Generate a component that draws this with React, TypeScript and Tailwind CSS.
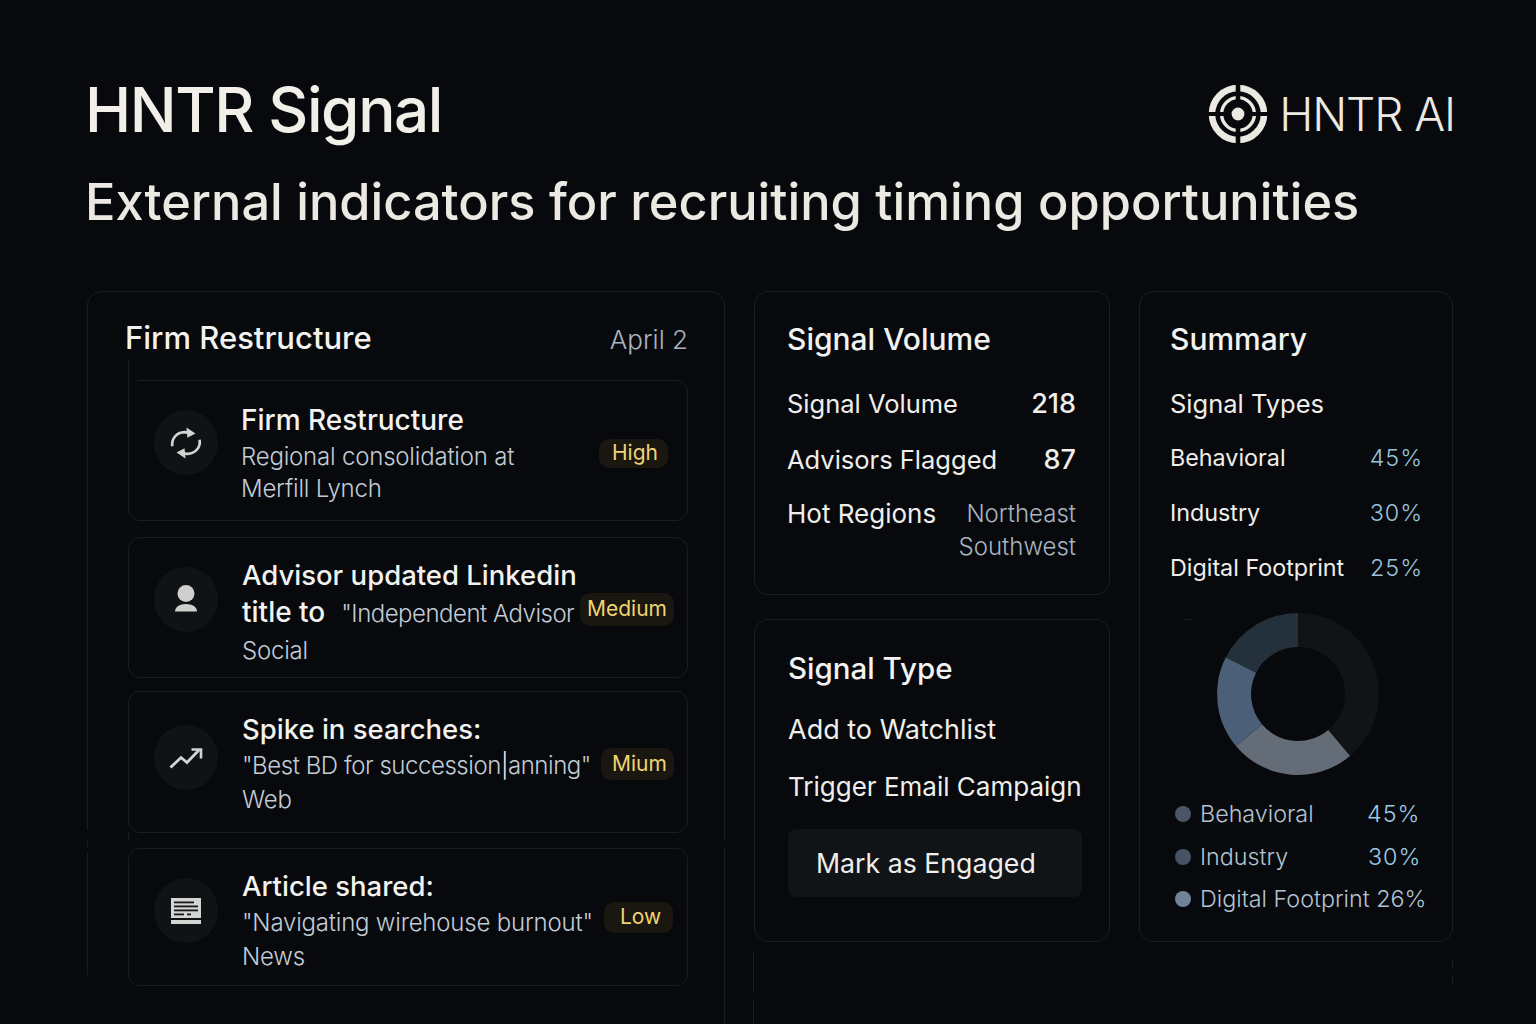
import React from "react";

const font = { fontFamily: "Inter, 'Liberation Sans', sans-serif" };

function polar(r: number, a: number): [number, number] {
  const t = (a * Math.PI) / 180;
  return [100 + r * Math.sin(t), 100 - r * Math.cos(t)];
}
function seg(a0: number, a1: number, R = 81, r = 47) {
  const [x0, y0] = polar(R, a0);
  const [x1, y1] = polar(R, a1);
  const [x2, y2] = polar(r, a1);
  const [x3, y3] = polar(r, a0);
  const large = a1 - a0 > 180 ? 1 : 0;
  return `M${x0} ${y0}A${R} ${R} 0 ${large} 1 ${x1} ${y1}L${x2} ${y2}A${r} ${r} 0 ${large} 0 ${x3} ${y3}Z`;
}

function Logo() {
  return (
    <svg width="62" height="62" viewBox="0 0 62 62" className="shrink-0">
      <g fill="none" stroke="#ece9e3">
        <circle cx="31" cy="31" r="26" strokeWidth="6.6" />
        <circle cx="31" cy="31" r="16.4" strokeWidth="3.4" />
      </g>
      <rect x="28.7" y="0" width="4.6" height="21" fill="#07090c" />
      <rect x="28.7" y="41" width="4.6" height="21" fill="#07090c" />
      <rect x="0" y="29" width="21" height="4" fill="#07090c" />
      <rect x="41" y="29" width="21" height="4" fill="#07090c" />
      <circle cx="31" cy="31" r="6.4" fill="#ece9e3" />
    </svg>
  );
}

function RefreshIcon() {
  return (
    <svg width="34" height="34" viewBox="0 0 36 36" fill="none">
      <path d="M3.6 21.5C2.2 13.5 8 6.8 16.5 6.5c2.2 0 4 .4 5.5 1.2" stroke="#d4d4d2" strokeWidth="2.8" />
      <path d="M18.5 1.5 28 8 19.5 12.5Z" fill="#d4d4d2" />
      <path d="M32.4 14.5c1.4 8-4.4 14.7-12.9 15-2.2 0-4-.4-5.5-1.2" stroke="#d4d4d2" strokeWidth="2.8" />
      <path d="M17.5 34.5 8 28 16.5 23.5Z" fill="#d4d4d2" />
    </svg>
  );
}
function PersonIcon() {
  return (
    <svg width="36" height="36" viewBox="0 0 36 36" fill="#cfcfcd">
      <circle cx="18" cy="11.5" r="8.5" />
      <path d="M7 29.5c0-4.5 4.5-7.5 11-7.5s11 3 11 7.5Z" />
    </svg>
  );
}
function TrendIcon() {
  return (
    <svg width="36" height="36" viewBox="0 0 36 36" fill="none">
      <path d="M2.5 27.5 13 17.5l6 5L31 10" stroke="#d4d4d2" strokeWidth="2.8" />
      <path d="M23.5 9.5h9.5V18.5" stroke="#d4d4d2" strokeWidth="2.6" />
    </svg>
  );
}
function NewsIcon() {
  return (
    <svg width="36" height="36" viewBox="0 0 36 36">
      <rect x="3" y="5" width="30" height="20" fill="#d4d4d2" />
      <rect x="6" y="8.5" width="20" height="1.8" fill="#14171a" />
      <rect x="6" y="12.5" width="24" height="1.8" fill="#14171a" />
      <rect x="6" y="16.5" width="24" height="1.8" fill="#14171a" />
      <rect x="6" y="20.5" width="10" height="1.8" fill="#14171a" />
      <rect x="19" y="20.5" width="4" height="1.8" fill="#14171a" />
      <rect x="3" y="27" width="30" height="4" fill="#d4d4d2" />
    </svg>
  );
}

type RowProps = {
  icon: React.ReactNode;
  title: React.ReactNode;
  lines: React.ReactNode[];
  badge: string;
  badgeClass: string;
  rowClass: string;
  iconClass: string;
  textClass: string;
  titleClass?: string;
  lineClass?: string;
};

function Row({
  icon,
  title,
  lines,
  badge,
  badgeClass,
  rowClass,
  iconClass,
  textClass,
  titleClass = "text-[27.5px] leading-[40px]",
  lineClass = "leading-[34px]",
}: RowProps) {
  return (
    <div className={`relative rounded-[12px] border border-[#171d26] ${rowClass}`}>
      <div className={`absolute flex h-[65px] w-[64px] items-center justify-center rounded-full bg-[#101316] ${iconClass}`}>
        {icon}
      </div>
      <div className={`absolute whitespace-nowrap ${textClass}`}>
        <div className={`font-medium text-[#f2f2f0] ${titleClass}`}>{title}</div>
        {lines.map((l, i) => (
          <div key={i} className={`text-[24px] font-light tracking-[-0.2px] text-[#c3ccd6] ${lineClass}`}>
            {l}
          </div>
        ))}
      </div>
      <div className={`absolute rounded-[10px] bg-[#1a1711] text-[21px] text-[#f0d372] ${badgeClass}`}>
        {badge}
      </div>
    </div>
  );
}

function Stat({ k, v, cls }: { k: string; v: string; cls: string }) {
  return (
    <div className={`flex items-baseline justify-between ${cls}`}>
      <span>{k}</span>
      <span className="font-light tracking-[1px] text-[#9cc3dc]">{v}</span>
    </div>
  );
}

function Mark({ cls }: { cls: string }) {
  return <div className={`absolute ${cls}`} />;
}

export default function App() {
  return (
    <div style={font} className="relative h-[1024px] w-[1536px] overflow-hidden bg-[#07090c] pl-[87px] pr-[84px] pt-[72px] text-[#f0eeea]">
      <div className="flex items-start justify-between">
        <h1 className="ml-[-2px] text-[62px] font-medium leading-[76px] tracking-[-1.4px] text-[#f2efe9]">HNTR Signal</h1>
        <div className="mr-[-3px] mt-[11px] flex items-center gap-[10px]">
          <Logo />
          <span className="text-[46px] font-light leading-[62px] tracking-[-1.1px] text-[#ece9e3]">HNTR AI</span>
        </div>
      </div>
      <h2 className="mt-[24px] ml-[-2px] text-[50.5px] font-medium leading-[60px] text-[#ece9e3]">
        External indicators for recruiting timing opportunities
      </h2>

      <div className="mt-[59px] grid grid-cols-[638px_356px_314px] gap-x-[29px]">
        {/* left */}
        <div className="relative h-[800px] rounded-[14px] border border-[#171d26]">
          <div className="flex items-baseline justify-between pl-[37px] pr-[36px] pt-[26px]">
            <span className="text-[31px] font-[450] leading-[40px] text-[#f2f2f0]">Firm Restructure</span>
            <span className="text-[26px] font-light leading-[40px] text-[#aab4bf]">April 2</span>
          </div>
          <div className="mt-[21px] ml-[40px] mr-[36px] flex flex-col">
            <Row
              icon={<RefreshIcon />}
              title="Firm Restructure"
              titleClass="text-[28px] leading-[42px]"
              lineClass="leading-[32px]"
              lines={["Regional consolidation at", "Merfill Lynch"]}
              badge="High"
              rowClass="-mt-[1px] h-[141px]"
              iconClass="left-[25px] top-[29px]"
              textClass="left-[112px] top-[18px]"
              badgeClass="left-[470px] top-[58px] h-[29px] pl-[13px] pr-[10px] leading-[28px]"
            />
            <Row
              icon={<PersonIcon />}
              title={<>Advisor updated Linkedin</>}
              titleClass="text-[27.5px] leading-[38px]"
              lineClass="leading-[37px]"
              lines={[
                <span key="t">
                  <span className="text-[28px] font-medium tracking-normal text-[#f2f2f0]">title to</span>
                  <span className="ml-[16px] tracking-[-0.5px]">"Independent Advisor</span>
                </span>,
                "Social",
              ]}
              badge="Medium"
              rowClass="mt-[16px] h-[141px]"
              iconClass="left-[25px] top-[29px]"
              textClass="left-[113px] top-[18px]"
              badgeClass="left-[451px] top-[55px] h-[33px] px-[7px] leading-[32px]"
            />
            <Row
              icon={<TrendIcon />}
              title="Spike in searches:"
              lines={[
                <span key="s" className="tracking-[-0.45px]">
                  "Best BD for succession<span className="text-[#f2f2f0]">|</span>anning"
                </span>,
                "Web",
              ]}
              badge="Mium"
              rowClass="mt-[13px] h-[142px]"
              iconClass="left-[25px] top-[33px]"
              textClass="left-[113px] top-[17px]"
              badgeClass="left-[472px] top-[56px] h-[32px] pl-[11px] pr-[7px] leading-[31px]"
            />
            <Row
              icon={<NewsIcon />}
              title="Article shared:"
              lines={['"Navigating wirehouse burnout"', "News"]}
              badge="Low"
              rowClass="mt-[15px] h-[138px]"
              iconClass="left-[25px] top-[29px]"
              textClass="left-[113px] top-[17px]"
              badgeClass="left-[475px] top-[53px] h-[31px] pl-[16px] pr-[12px] leading-[30px]"
            />
          </div>
        </div>

        {/* middle */}
        <div className="flex h-[651px] flex-col gap-[24px]">
          <div className="h-[304px] rounded-[14px] border border-[#171d26] pl-[32px] pr-[33px] pt-[26px] text-[25.5px] leading-[40px]">
            <div className="text-[30px] font-[450] leading-[42px] text-[#f2f2f0]">Signal Volume</div>
            <div className="mt-[24px] flex justify-between"><span>Signal Volume</span><span className="text-[27px] font-medium">218</span></div>
            <div className="mt-[16px] flex justify-between"><span>Advisors Flagged</span><span className="text-[27px] font-medium">87</span></div>
            <div className="mt-[14px] flex justify-between">
              <span className="text-[26px]">Hot Regions</span>
              <span className="mt-[3px] text-right text-[24px] font-light leading-[33px] text-[#aab4bf]">Northeast<br />Southwest</span>
            </div>
          </div>
          <div className="h-[323px] whitespace-nowrap rounded-[14px] border border-[#171d26] pl-[33px] pr-[27px] pt-[27px] text-[27px] leading-[40px]">
            <div className="text-[29.5px] font-[450] leading-[42px] text-[#f2f2f0]">Signal Type</div>
            <div className="mt-[21px]">Add to Watchlist</div>
            <div className="mt-[17px] text-[26px]">Trigger Email Campaign</div>
            <div className="mt-[22px] flex h-[68px] items-center rounded-[8px] bg-[#101417] pl-[28px] text-[26.7px]">Mark as Engaged</div>
          </div>
        </div>

        {/* right */}
        <div className="h-[651px] whitespace-nowrap rounded-[14px] border border-[#171d26] pl-[30px] pr-[29px] pt-[26px]">
          <div className="text-[30px] font-[450] leading-[42px] text-[#f2f2f0]">Summary</div>
          <div className="mt-[24px] text-[25.5px] leading-[40px]">Signal Types</div>
          <Stat k="Behavioral" v="45%" cls="mt-[14px] text-[23.3px] leading-[40px]" />
          <Stat k="Industry" v="30%" cls="mt-[15px] text-[23.3px] leading-[40px]" />
          <Stat k="Digital Footprint" v="25%" cls="mt-[15px] text-[23.3px] leading-[40px]" />
          <svg width="200" height="200" viewBox="0 0 200 200" className="ml-[28px] mt-[6px]">
            <path d={seg(0, 140)} fill="#101417" />
            <path d={seg(140, 230)} fill="#646c78" />
            <path d={seg(230, 297)} fill="#4b5f79" />
            <path d={seg(297, 360)} fill="#25303d" />
          </svg>
          <div className="-mt-[1px] ml-[5px] text-[23.3px] font-light leading-[42.5px] text-[#b4c3d2]">
            <div className="flex items-center">
              <span className="h-[16px] w-[16px] shrink-0 rounded-full bg-[#4a5667]" />
              <span className="ml-[9px] w-[167px]">Behavioral</span>
              <span className="tracking-[1px] text-[#9cc9e6]">45%</span>
            </div>
            <div className="flex items-center">
              <span className="h-[16px] w-[16px] shrink-0 rounded-full bg-[#465365]" />
              <span className="ml-[9px] w-[168px]">Industry</span>
              <span className="tracking-[1px] text-[#9cc9e6]">30%</span>
            </div>
            <div className="flex items-center">
              <span className="h-[16px] w-[16px] shrink-0 rounded-full bg-[#728299]" />
              <span className="ml-[9px]">Digital Footprint 26%</span>
            </div>
          </div>
        </div>
      </div>

      {/* broken frame lines */}
      <Mark cls="left-[86px] top-[975px] h-[49px] w-[3px] bg-[#07090c]" />
      <Mark cls="left-[86px] top-[830px] h-[9px] w-[3px] bg-[#07090c]" />
      <Mark cls="left-[86px] top-[847px] h-[5px] w-[3px] bg-[#07090c]" />
      <Mark cls="left-[723px] top-[840px] h-[8px] w-[3px] bg-[#07090c]" />
      <Mark cls="left-[127px] top-[378px] h-[14px] w-[10px] bg-[#07090c]" />
      <Mark cls="left-[128px] top-[360px] h-[32px] w-px bg-[#171d26]" />
      <Mark cls="left-[128px] top-[832px] h-[8px] w-px bg-[#171d26]" />
      <Mark cls="left-[753px] top-[952px] h-[40px] w-px bg-[#171d26]" />
      <Mark cls="left-[753px] top-[1000px] h-[24px] w-px bg-[#171d26]" />
      <Mark cls="left-[1452px] top-[960px] h-[8px] w-px bg-[#171d26]" />
      <Mark cls="left-[1452px] top-[976px] h-[8px] w-px bg-[#171d26]" />
      <Mark cls="left-[1184px] top-[619px] h-px w-[8px] bg-[#171d26]" />
    </div>
  );
}
